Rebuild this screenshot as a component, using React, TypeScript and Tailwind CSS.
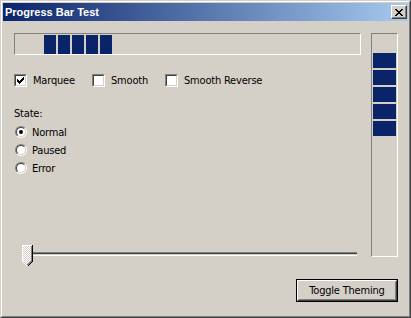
import React from "react";

const FONT = "font-['DejaVu_Sans_Condensed','Liberation_Sans',sans-serif]";

// classic 7x7 check glyph, one row per entry
const CHECK_ROWS = ["......#", ".....##", "#...###", "##.###.", "#####..", ".###...", "..#...."];

function CheckGlyph() {
  return (
    <svg width="7" height="7" viewBox="0 0 7 7" shapeRendering="crispEdges">
      {CHECK_ROWS.flatMap((row, y) =>
        row.split("").map((c, x) => (c === "#" ? <rect key={`${x}-${y}`} x={x} y={y} width="1" height="1" fill="#000" /> : null))
      )}
    </svg>
  );
}

function Checkbox({ label, checked, width }: { label: string; checked?: boolean; width: string }) {
  return (
    <div className={`flex items-center gap-[6px] ${width}`}>
      <span className="flex h-[13px] w-[13px] shrink-0 border border-t-[#808080] border-l-[#808080] border-r-white border-b-white">
        <span className="flex flex-1 items-center justify-center border border-t-[#404040] border-l-[#404040] border-r-[#d4d0c8] border-b-[#d4d0c8] bg-white">
          {checked && <CheckGlyph />}
        </span>
      </span>
      <span className="leading-[13px]">{label}</span>
    </div>
  );
}

function Radio({ label, checked }: { label: string; checked?: boolean }) {
  return (
    <div className="flex h-[18px] items-center gap-[5px] pl-[1px]">
      <span className="flex h-[12px] w-[12px] shrink-0 rounded-full border border-t-[#808080] border-l-[#808080] border-r-white border-b-white">
        <span className="flex flex-1 items-center justify-center rounded-full border border-t-[#404040] border-l-[#404040] border-r-[#d4d0c8] border-b-[#d4d0c8] bg-white">
          {checked && <span className="h-[4px] w-[4px] rounded-full bg-black" />}
        </span>
      </span>
      <span className="leading-[13px]">{label}</span>
    </div>
  );
}

function SliderThumb() {
  return (
    <svg width="11" height="22" viewBox="0 0 11 22" shapeRendering="crispEdges" className="absolute left-[8px] top-0">
      <defs>
        <pattern id="dither" width="2" height="2" patternUnits="userSpaceOnUse">
          <rect width="2" height="2" fill="#d4d0c8" />
          <rect width="1" height="1" fill="#ffffff" />
          <rect x="1" y="1" width="1" height="1" fill="#ffffff" />
        </pattern>
      </defs>
      <path d="M0 0H11V16L5.5 21.5L0 16Z" fill="url(#dither)" />
      <path d="M0.5 16.5V0.5H10" stroke="#ffffff" fill="none" />
      <path d="M0.5 16.5L5 21" stroke="#ffffff" fill="none" shapeRendering="auto" />
      <path d="M10.5 0V16.5L5.5 21.5" stroke="#000" fill="none" />
      <path d="M9.5 1V16L5.5 20" stroke="#808080" fill="none" />
    </svg>
  );
}

export default function App() {
  const blocks = [0, 1, 2, 3, 4];
  return (
    <div className={`h-[318px] w-[411px] bg-[#d4d0c8] text-[11px] tracking-[-0.2px] text-black ${FONT}`}>
      {/* window frame */}
      <div className="flex h-full w-full flex-col border border-t-[#d4d0c8] border-l-[#d4d0c8] border-r-[#404040] border-b-[#404040]">
        <div className="flex flex-1 flex-col border border-t-white border-l-white border-r-[#808080] border-b-[#808080] p-[1px]">
          {/* title bar */}
          <div className="flex h-[18px] items-center justify-between bg-[linear-gradient(to_right,#0a246a,#a6caf0)] pl-[2px] pr-[1px]">
            <span className="font-['Liberation_Sans',sans-serif] text-[11px] font-bold leading-[13px] tracking-normal text-white">
              Progress Bar Test
            </span>
            <button className="flex h-[14px] w-[16px] border border-t-white border-l-white border-r-[#404040] border-b-[#404040]">
              <span className="flex flex-1 items-center justify-center border border-t-[#d4d0c8] border-l-[#d4d0c8] border-r-[#808080] border-b-[#808080] bg-[#d4d0c8]">
                <svg width="8" height="7" viewBox="0 0 8 7" shapeRendering="crispEdges">
                  <path d="M0 0h2v1h1v1h2v-1h1v-1h2v1h-1v1h-1v1h-1v1h1v1h1v1h1v1h-2v-1h-1v-1h-2v1h-1v1h-2v-1h1v-1h1v-1h1v-1h-1v-1h-1v-1h-1z" fill="#000" />
                </svg>
              </span>
            </button>
          </div>

          {/* client area */}
          <div className="flex flex-1 flex-col pl-[11px] pr-[10px] pt-[12px]">
            <div className="flex items-start gap-[10px]">
              <div className="flex w-[347px] flex-col">
                {/* horizontal progress bar */}
                <div className="flex h-[22px] border border-t-[#808080] border-l-[#808080] border-r-white border-b-white pl-[29px] pt-[1px]">
                  <div className="flex h-[19px] gap-[2px]">
                    {blocks.map((i) => (
                      <span key={i} className="h-full w-[12px] bg-[#0a246a]" />
                    ))}
                  </div>
                </div>

                <div className="mt-[19px] flex">
                  <Checkbox label="Marquee" checked width="w-[78px]" />
                  <Checkbox label="Smooth" width="w-[73px]" />
                  <Checkbox label="Smooth Reverse" width="w-[120px]" />
                </div>

                <div className="mt-[20px] leading-[13px]">State:</div>
                <div className="mt-[3px] flex flex-col">
                  <Radio label="Normal" checked />
                  <Radio label="Paused" />
                  <Radio label="Error" />
                </div>

                {/* trackbar */}
                <div className="relative mt-[68px] h-[22px]">
                  <div className="ml-[8px] mt-[7px] flex h-[4px] w-[335px] flex-col">
                    <span className="h-[1px] bg-[#808080]" />
                    <span className="h-[1px] bg-[#404040]" />
                    <span className="h-[1px] bg-[#d4d0c8]" />
                    <span className="h-[1px] bg-white" />
                  </div>
                  <SliderThumb />
                </div>
              </div>

              {/* vertical progress bar */}
              <div className="flex h-[224px] w-[27px] flex-col border border-t-[#808080] border-l-[#808080] border-r-white border-b-white px-[1px] pt-[19px]">
                <div className="flex flex-col gap-[2px]">
                  {blocks.map((i) => (
                    <span key={i} className="h-[15px] w-full bg-[#0a246a]" />
                  ))}
                </div>
              </div>
            </div>

            <div className="mt-[12px] flex justify-end">
              <button className="flex h-[23px] w-[102px] border border-black">
                <span className="flex flex-1 border border-t-white border-l-white border-r-[#404040] border-b-[#404040]">
                  <span className="flex flex-1 items-center justify-center border border-t-[#d4d0c8] border-l-[#d4d0c8] border-r-[#808080] border-b-[#808080] leading-[13px]">
                    Toggle Theming
                  </span>
                </span>
              </button>
            </div>
          </div>
        </div>
      </div>
    </div>
  );
}
